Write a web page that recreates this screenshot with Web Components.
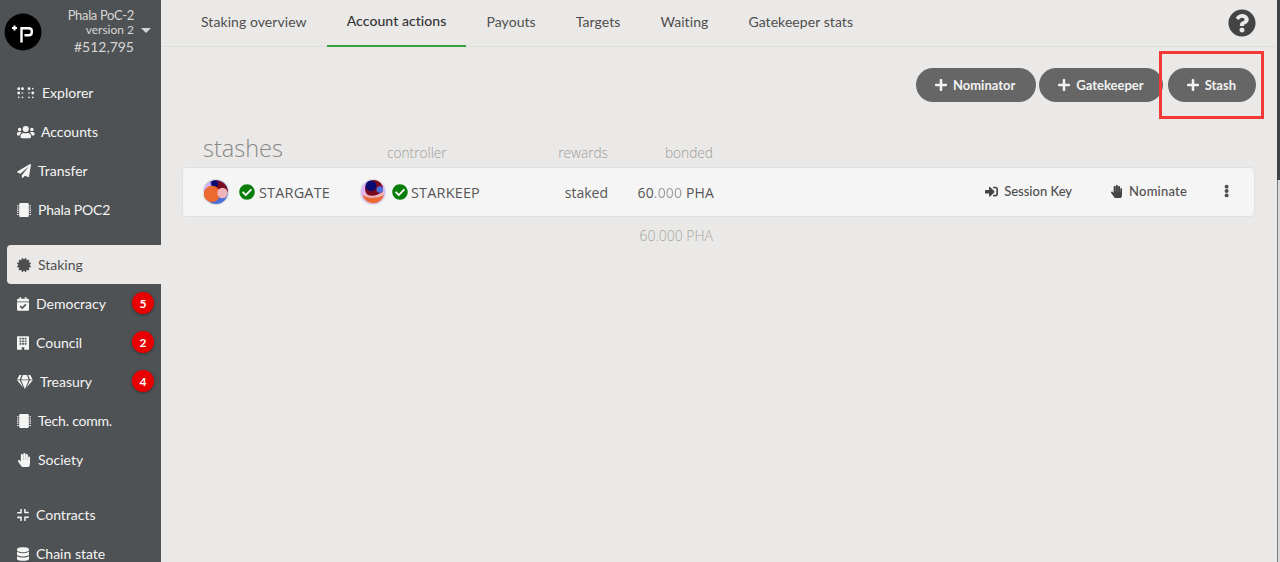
<!DOCTYPE html>
<html>
<head>
<meta charset="utf-8">
<title>Staking</title>
<style>
    html, body { margin: 0; height: 100%; overflow: hidden; }
    body { font-family: Lato, "Liberation Sans", sans-serif; background: #eae9e7; }
</style>
</head>
<body>
<polka-app></polka-app>

<script>
// Icons used around the page, all on their original font-awesome style grids.
const ICONS = {
    braille: { box: '0 0 640 512', body: '<g fill="currentColor"><circle cx="64" cy="96" r="52"/><circle cx="200" cy="96" r="52"/><circle cx="64" cy="256" r="52"/><circle cx="200" cy="256" r="30"/><circle cx="64" cy="416" r="30"/><circle cx="200" cy="416" r="30"/><circle cx="440" cy="96" r="52"/><circle cx="576" cy="96" r="30"/><circle cx="440" cy="256" r="30"/><circle cx="576" cy="256" r="52"/><circle cx="440" cy="416" r="30"/><circle cx="576" cy="416" r="30"/></g>' },
    users: { box: '0 0 640 512', body: '<path fill="currentColor" d="M96 224a64 64 0 1 0 0-128 64 64 0 0 0 0 128zm448 0a64 64 0 1 0 0-128 64 64 0 0 0 0 128zm32 32h-64c-17.600 0-33.500 7.100-45.100 18.600 40.300 22.100 68.900 62 75.100 109.400h66c17.700 0 32-14.300 32-32v-32c0-35.300-28.700-64-64-64zm-256 0a112 112 0 1 0 0-224 112 112 0 0 0 0 224zm76.800 32h-8.300c-20.800 10-43.900 16-68.500 16s-47.600-6-68.500-16h-8.300C179.600 288 128 339.600 128 403.200V432c0 26.500 21.500 48 48 48h288c26.500 0 48-21.500 48-48v-28.800c0-63.600-51.600-115.200-115.200-115.200zm-223.700-13.400C161.500 263.100 145.600 256 128 256H64c-35.300 0-64 28.700-64 64v32c0 17.700 14.300 32 32 32h65.900c6.300-47.400 34.900-87.300 75.200-109.400z"/>' },
    plane: { box: '0 0 512 512', body: '<path fill="currentColor" d="M476 3.200L12.500 270.600c-18.100 10.400-15.800 35.600 2.200 43.200L121 358.400l287.300-253.200c5.500-4.900 13.300 2.600 8.600 8.300L176 407v80.500c0 23.600 28.500 32.900 42.500 15.800L282 426l124.600 52.200c14.200 6 30.400-2.900 33-18.200l72-432C515 7.800 493.300-6.800 476 3.200z"/>' },
    chip: { box: '0 0 512 512', body: '<path fill="currentColor" d="M128 0h256c26 0 48 22 48 48v416c0 26-22 48-48 48H128c-26 0-48-22-48-48V48c0-26 22-48 48-48zM0 80h56v40H0zM0 160h56v40H0zM0 240h56v40H0zM0 320h56v40H0zM0 400h56v40H0zM456 80h56v40h-56zM456 160h56v40h-56zM456 240h56v40h-56zM456 320h56v40h-56zM456 400h56v40h-56z"/>' },
    certificate: { box: '0 0 512 512', body: '<path fill="currentColor" d="M458.600 255.900l46-45c13.700-13 7.300-36-10.700-40.300l-62.700-16 17.700-62c5-17.800-11.800-34.700-29.700-29.700l-62 17.700-16-62.700C336.900.300 313.600-6 300.900 7.400l-45 46.300-45-46.300C198.200-6 174.800.200 170.600 17.900l-16 62.700-62-17.700C74.800 57.900 58 74.700 63 92.600l17.700 62-62.700 16C0 174.900-6.400 197.900 7.300 210.900l46 45-46 45c-13.700 13-7.300 36 10.700 40.300l62.700 16-17.700 62c-5 17.800 11.800 34.700 29.700 29.700l62-17.700 16 62.700c4.400 18.500 28.200 23.800 40.300 10.700l45-46 45 46c12.300 13.300 35.900 7.600 40.300-10.700l16-62.700 62 17.700c17.800 5 34.700-11.800 29.700-29.700l-17.700-62 62.700-16c18-4.300 24.400-27.300 10.700-40.300z"/>' },
    calendar: { box: '0 0 448 512', body: '<path fill="currentColor" d="M436 160H12c-6.600 0-12-5.400-12-12v-36c0-26.500 21.500-48 48-48h48V12c0-6.600 5.400-12 12-12h40c6.600 0 12 5.400 12 12v52h128V12c0-6.600 5.400-12 12-12h40c6.600 0 12 5.400 12 12v52h48c26.500 0 48 21.500 48 48v36c0 6.600-5.400 12-12 12zM12 192h424c6.600 0 12 5.400 12 12v260c0 26.500-21.500 48-48 48H48c-26.500 0-48-21.500-48-48V204c0-6.600 5.400-12 12-12zm333.300 95.900l-28.200-28.400c-4.700-4.700-12.300-4.700-17-.1L194.100 364.400l-45.900-46.300c-4.700-4.700-12.300-4.700-17-.1l-28.400 28.200c-4.700 4.700-4.700 12.300-.1 17l82.600 83.300c4.700 4.700 12.300 4.700 17 .1l142.900-141.700c4.700-4.700 4.700-12.300.1-17z"/>' },
    building: { box: '0 0 448 512', body: '<path fill="currentColor" fill-rule="evenodd" d="M24 0h400c13 0 24 11 24 24v488H272v-88c0-7-5-12-12-12h-72c-7 0-12 5-12 12v88H0V24C0 11 11 0 24 0zM96 64v64h64V64zm96 0v64h64V64zm96 0v64h64V64zM96 160v64h64v-64zm96 0v64h64v-64zm96 0v64h64v-64zM96 256v64h64v-64zm96 0v64h64v-64zm96 0v64h64v-64z"/>' },
    gem: { box: '0 0 576 512', body: '<path fill="currentColor" d="M485.500 0L576 160H474.900L405.700 0h79.800zm-128 0l69.200 160H149.300L218.500 0h139zm-267 0h79.800l-69.200 160H0L90.500 0zM0 192h100.700l123 251.700c1.500 3.100-2.700 5.900-5 3.300L0 192zm148.200 0h279.600l-137 318.200c-1 2.400-4.500 2.400-5.500 0L148.200 192zm204.100 251.700l123-251.700H576L357.300 446.900c-2.300 2.700-6.500-.1-5-3.200z"/>' },
    hand: { box: '0 0 448 512', body: '<path fill="currentColor" d="M408.781 128.007C386.356 127.578 368 146.360 368 168.790V256h-8V79.790c0-22.430-18.356-41.212-40.781-40.783C297.488 39.423 280 57.169 280 79v177h-8V40.790C272 18.360 253.644-.422 231.219.007 209.488.423 192 18.169 192 40v216h-8V80.790c0-22.430-18.356-41.212-40.781-40.783C121.488 40.423 104 58.169 104 80v235.992l-31.648-43.519c-12.993-17.866-38.009-21.817-55.877-8.823-17.865 12.994-21.815 38.010-8.822 55.877l125.601 172.705A48 48 0 0 0 172.073 512h197.590c22.274 0 41.622-15.324 46.724-37.006l26.508-112.660a192.011 192.011 0 0 0 5.104-43.975V168c.001-21.831-17.487-39.577-39.218-39.993z"/>' },
    compress: { box: '0 0 448 512', body: '<path fill="currentColor" d="M136 32h32c6 0 12 6 12 12v136c0 13-11 24-24 24H20c-6 0-12-6-12-12v-32c0-6 6-12 12-12h104V44c0-6 6-12 12-12zM280 32h32c6 0 12 6 12 12v92h104c6 0 12 6 12 12v32c0 6-6 12-12 12H292c-13 0-24-11-24-24V44c0-6 6-12 12-12zM20 308h136c13 0 24 11 24 24v136c0 6-6 12-12 12h-32c-6 0-12-6-12-12V376H20c-6 0-12-6-12-12v-32c0-6 6-12 12-12zM292 308h136c6 0 12 6 12 12v32c0 6-6 12-12 12H324v104c0 6-6 12-12 12h-32c-6 0-12-6-12-12V332c0-13 11-24 24-24z"/>' },
    database: { box: '0 0 448 512', body: '<path fill="currentColor" d="M448 73.100v45.700C448 159.100 347.700 192 224 192S0 159.100 0 118.900V73.100C0 32.900 100.300 0 224 0s224 32.900 224 73.100zm0 102.900v102.900c0 40.200-100.300 73.100-224 73.100S0 319.100 0 278.900V176c48.100 33.100 136.200 48.600 224 48.600S399.900 209.100 448 176zm0 160v102.900C448 479.100 347.700 512 224 512S0 479.100 0 438.900V336c48.100 33.100 136.200 48.600 224 48.600S399.900 369.100 448 336z"/>' },
    plus: { box: '0 0 448 512', body: '<path fill="currentColor" d="M416 208H272V64c0-17.670-14.330-32-32-32h-32c-17.670 0-32 14.330-32 32v144H32c-17.670 0-32 14.330-32 32v32c0 17.670 14.330 32 32 32h144v144c0 17.670 14.330 32 32 32h32c17.670 0 32-14.330 32-32V304h144c17.670 0 32-14.330 32-32v-32c0-17.670-14.330-32-32-32z"/>' },
    check: { box: '0 0 512 512', body: '<path fill="currentColor" d="M504 256c0 136.967-111.033 248-248 248S8 392.967 8 256 119.033 8 256 8s248 111.033 248 248zM227.314 387.314l184-184c6.248-6.248 6.248-16.379 0-22.627l-22.627-22.627c-6.248-6.249-16.379-6.249-22.628 0L216 308.118l-70.059-70.059c-6.248-6.248-16.379-6.248-22.628 0l-22.627 22.627c-6.248 6.248-6.248 16.379 0 22.627l104 104c6.249 6.249 16.379 6.249 22.628 0z"/>' },
    question: { box: '0 0 512 512', body: '<path fill="currentColor" d="M504 256c0 136.997-111.043 248-248 248S8 392.997 8 256C8 119.083 119.043 8 256 8s248 111.083 248 248zM262.655 90c-54.497 0-89.255 22.957-116.549 63.758-3.536 5.286-2.353 12.415 2.715 16.258l34.699 26.310c5.205 3.947 12.621 3.008 16.665-2.122 17.864-22.658 30.113-35.797 57.303-35.797 20.429 0 45.698 13.148 45.698 32.958 0 14.976-12.363 22.667-32.534 33.976C247.128 238.528 216 254.941 216 296v4c0 6.627 5.373 12 12 12h56c6.627 0 12-5.373 12-12v-1.333c0-28.462 83.186-29.647 83.186-106.667 0-58.002-60.165-102-116.531-102zM256 338c-25.365 0-46 20.635-46 46 0 25.364 20.635 46 46 46s46-20.636 46-46c0-25.365-20.635-46-46-46z"/>' },
    signin: { box: '0 0 512 512', body: '<path fill="currentColor" d="M416 448h-84c-6.600 0-12-5.400-12-12v-40c0-6.600 5.400-12 12-12h84c17.700 0 32-14.300 32-32V160c0-17.700-14.300-32-32-32h-84c-6.600 0-12-5.400-12-12V76c0-6.600 5.400-12 12-12h84c53 0 96 43 96 96v192c0 53-43 96-96 96zm-47-201L201 79c-15-15-41-4.500-41 17v96H24c-13.300 0-24 10.700-24 24v96c0 13.300 10.700 24 24 24h136v96c0 21.500 26 32 41 17l168-168c9.300-9.400 9.300-24.600 0-34z"/>' },
    dots: { box: '0 0 192 512', body: '<g fill="currentColor"><circle cx="96" cy="96" r="72"/><circle cx="96" cy="256" r="72"/><circle cx="96" cy="416" r="72"/></g>' }
};

// The lighter font of the table, same in all its parts.
const TABLE_FONT = '"Open Sans", Lato, sans-serif';

// ### A single glyph from the list above ###
class PolkaIcon extends HTMLElement {
    connectedCallback() {
        const icon = ICONS[this.getAttribute('name')];
        this.attachShadow({ mode: 'open' });
        this.shadowRoot.innerHTML = `
            <style>
                :host { display: inline-flex; align-items: center; justify-content: center; flex: none; }
                svg { display: block; height: 100%; }
            </style>
            <svg viewBox="${icon.box}" aria-hidden="true">${icon.body}</svg>
        `;
    }
}

// ### One link of the left menu, with an optional red count ###
class NavItem extends HTMLElement {
    connectedCallback() {
        const icon = this.getAttribute('icon');
        const count = this.getAttribute('count');
        const width = this.getAttribute('icon-width') || 14;
        const gap = this.getAttribute('gap') || 7;
        this.attachShadow({ mode: 'open' });
        this.shadowRoot.innerHTML = `
            <style>
                :host {
                    display: flex;
                    align-items: center;
                    height: 39px;
                    margin-left: 7px;
                    padding-left: 10px;
                    font-size: 14px;
                    color: #f5f5f4;
                    box-sizing: border-box;
                    position: relative;
                }
                :host([active]) {
                    background: #eae9e7;
                    color: #4e4e4e;
                    border-radius: 4px 0 0 4px;
                }
                polka-icon { height: 14px; width: ${width}px; margin-right: ${gap}px; }
                .count {
                    position: absolute;
                    right: 7px;
                    top: 8px;
                    width: 22px;
                    height: 22px;
                    border-radius: 50%;
                    background: #e80000;
                    color: #fff;
                    font-size: 12px;
                    font-weight: 700;
                    display: flex;
                    align-items: center;
                    justify-content: center;
                    box-shadow: 0 1px 3px rgba(0, 0, 0, 0.4);
                }
            </style>
            <polka-icon name="${icon}"></polka-icon>
            <slot></slot>
            ${count ? `<span class="count">${count}</span>` : ''}
        `;
    }
}

// ### Chain logo, name, version and best block ###
class ChainInfo extends HTMLElement {
    constructor() {
        super();
        this.attachShadow({ mode: 'open' });
        this.shadowRoot.innerHTML = `
            <style>
                :host {
                    display: flex;
                    align-items: center;
                    height: 64px;
                    padding: 0 0 0 4px;
                    color: #d6d6d5;
                }
                .logo { width: 38px; height: 38px; flex: none; }
                .info {
                    flex: 1;
                    padding-right: 27px;
                    text-align: right;
                    position: relative;
                }
                .name { font-size: 13px; line-height: 14px; letter-spacing: -0.35px; }
                .version { font-size: 12px; line-height: 15px; }
                .best { font-size: 14px; line-height: 19px; }
                .caret {
                    position: absolute;
                    right: 10px;
                    top: 20px;
                    width: 0;
                    height: 0;
                    border: 5px solid transparent;
                    border-top-color: #d6d6d5;
                    border-bottom: 0;
                }
            </style>
            <svg class="logo" viewBox="0 0 38 38">
                <circle cx="19" cy="19" r="18.500" fill="#000"/>
                <path d="M17.500 29.500V15.200h7.300q3 0 3 3v1q0 3-3 3H20.500" fill="none" stroke="#fff" stroke-width="2.400"/>
                <path d="M10.500 12.500v5M8 15h5" stroke="#fff" stroke-width="2"/>
            </svg>
            <div class="info">
                <div class="name">Phala PoC-2</div>
                <div class="version">version 2</div>
                <div class="best">#512,795</div>
                <span class="caret"></span>
            </div>
        `;
    }
}

// ### Left column ###
class SideBar extends HTMLElement {
    constructor() {
        super();
        this.attachShadow({ mode: 'open' });
        this.shadowRoot.innerHTML = `
            <style>
                :host {
                    display: block;
                    width: 161px;
                    flex: none;
                    height: 562px;
                    overflow: hidden;
                    background: #4f5255;
                }
                .list { padding-top: 9px; }
                .spacer { height: 16px; }
                .tight { letter-spacing: -0.2px; }
            </style>
            <chain-info></chain-info>
            <div class="list">
                <nav-item icon="braille" icon-width="18" gap="7">Explorer</nav-item>
                <nav-item icon="users" icon-width="18" gap="6">Accounts</nav-item>
                <nav-item icon="plane" gap="7">Transfer</nav-item>
                <nav-item class="tight" icon="chip" gap="7">Phala POC2</nav-item>
                <div class="spacer"></div>
                <nav-item icon="certificate" active gap="7">Staking</nav-item>
                <nav-item icon="calendar" icon-width="12" gap="7" count="5">Democracy</nav-item>
                <nav-item icon="building" icon-width="12" gap="7" count="2">Council</nav-item>
                <nav-item icon="gem" icon-width="16" gap="7" count="4">Treasury</nav-item>
                <nav-item class="tight" icon="chip" gap="7">Tech. comm.</nav-item>
                <nav-item icon="hand" gap="7">Society</nav-item>
                <div class="spacer"></div>
                <nav-item icon="compress" icon-width="12" gap="7">Contracts</nav-item>
                <nav-item icon="database" icon-width="12" gap="7">Chain state</nav-item>
            </div>
        `;
    }
}

// ### Tabs across the top ###
class TabBar extends HTMLElement {
    constructor() {
        super();
        this.attachShadow({ mode: 'open' });
        const tabs = ['Staking overview', 'Account actions', 'Payouts', 'Targets', 'Waiting', 'Gatekeeper stats'];
        this.shadowRoot.innerHTML = `
            <style>
                :host {
                    display: flex;
                    align-items: stretch;
                    height: 47px;
                    box-sizing: border-box;
                    padding: 0 24px 0 20px;
                    border-bottom: 1px solid #dededc;
                    font-size: 14px;
                    color: #4e4e4e;
                    letter-spacing: 0.07px;
                }
                .tab {
                    display: flex;
                    align-items: center;
                    padding: 0 20px 2px;
                    margin-bottom: -1px;
                    border-bottom: 2px solid transparent;
                    box-sizing: border-box;
                }
                .tab.active {
                    color: #333;
                    font-weight: 500;
                    border-bottom-color: #36a23f;
                    padding-bottom: 4px;
                }
                polka-icon {
                    width: 28px;
                    height: 28px;
                    margin-left: auto;
                    align-self: center;
                    color: #444;
                }
            </style>
            ${tabs.map((t, i) => `<div class="tab${i === 1 ? ' active' : ''}">${t}</div>`).join('')}
            <polka-icon name="question"></polka-icon>
        `;
    }
}

// ### Dark rounded action button ###
class ActionButton extends HTMLElement {
    constructor() {
        super();
        this.attachShadow({ mode: 'open' });
        this.shadowRoot.innerHTML = `
            <style>
                :host {
                    display: inline-flex;
                    align-items: center;
                    height: 34px;
                    padding: 0 20px 0 19px;
                    box-sizing: border-box;
                    border-radius: 17px;
                    background: #666;
                    color: #f2f2f2;
                    font-size: 13px;
                    font-weight: 700;
                }
                polka-icon { height: 14px; width: 12px; margin-right: 6px; }
            </style>
            <polka-icon name="plus"></polka-icon><slot></slot>
        `;
    }
}

// ### Generated account circle ###
class IdentIcon extends HTMLElement {
    connectedCallback() {
        const variant = this.getAttribute('variant');
        this.attachShadow({ mode: 'open' });
        const shapes = variant === 'stash'
            ? `<circle cx="12" cy="12" r="12" fill="#4a6fd8"/>
               <path d="M7 1.500a12 12 0 0 1 17 10.500H14z" fill="#7a0a1e"/>
               <path d="M0 12a12 12 0 0 1 6-10.400L8 10z" fill="#d9b3f5"/>
               <circle cx="10.800" cy="3.800" r="3.400" fill="#0a0a70"/>
               <circle cx="8" cy="14" r="8.200" fill="#ec6a32"/>
               <circle cx="18.500" cy="13" r="5.200" fill="#f0b5ba"/>`
            : `<circle cx="12" cy="12" r="12" fill="#dcb6f7"/>
               <circle cx="13" cy="9" r="9" fill="#7a0a1e"/>
               <path d="M1.500 15a11 11 0 0 0 21.500-1c-6 5-15 5-21.500 1z" fill="#ec6a32"/>
               <path d="M2 12q9 8 21-1l-.2 4q-10 5.500-19.800.500z" fill="#f0b5ba"/>
               <circle cx="10" cy="5.800" r="5.400" fill="#0a0a70"/>
               <circle cx="18.800" cy="9.600" r="3.300" fill="#4a6fd8"/>`;
        this.shadowRoot.innerHTML = `
            <style>
                :host { display: block; width: 24px; height: 24px; flex: none; }
                svg { display: block; filter: drop-shadow(0 0 1px rgba(0, 0, 0, 0.25)); }
            </style>
            <svg width="24" height="24" viewBox="0 0 24 24">${shapes}</svg>
        `;
    }
}

// ### Avatar, green tick and account name ###
class AccountName extends HTMLElement {
    connectedCallback() {
        const gap = this.getAttribute('gap') || 11;
        const after = this.getAttribute('after') || 3;
        this.attachShadow({ mode: 'open' });
        this.shadowRoot.innerHTML = `
            <style>
                :host { display: flex; align-items: center; font-size: 14.500px; letter-spacing: 0.15px; color: #555; }
                ident-icon { margin-right: ${gap}px; }
                polka-icon { width: 16px; height: 16px; color: #0a7d0a; margin-right: ${after}px; }
            </style>
            <ident-icon variant="${this.getAttribute('variant')}"></ident-icon>
            <polka-icon name="check"></polka-icon>
            <slot></slot>
        `;
    }
}

// ### Small text button inside a row ###
class RowAction extends HTMLElement {
    connectedCallback() {
        this.attachShadow({ mode: 'open' });
        this.shadowRoot.innerHTML = `
            <style>
                :host { display: inline-flex; align-items: center; font-family: Lato, sans-serif; font-size: 13px; color: #4e4e4e; font-weight: 500; }
                polka-icon { height: 13px; width: 13px; margin-right: 6px; color: #444; }
            </style>
            <polka-icon name="${this.getAttribute('icon')}"></polka-icon><slot></slot>
        `;
    }
}

// ### Bonded amount, with the decimals faded ###
class BalanceValue extends HTMLElement {
    constructor() {
        super();
        this.attachShadow({ mode: 'open' });
        this.shadowRoot.innerHTML = `
            <style>
                :host { display: inline-block; }
                .dec { opacity: var(--decimals-opacity, 0.55); }
            </style>
            60<span class="dec">.000</span> PHA
        `;
    }
}

// ### The stashes table: header, one account row, the footer total ###
class StashTable extends HTMLElement {
    constructor() {
        super();
        this.attachShadow({ mode: 'open' });
        this.shadowRoot.innerHTML = `
            <style>
                :host { display: block; font-family: ${TABLE_FONT}; font-size: 14px; }
                .grid {
                    display: grid;
                    grid-template-columns: 178px 141px 106px 1fr;
                    align-items: center;
                }
                .head {
                    height: 38px;
                    align-items: end;
                    color: #9c9c9a;
                    font-size: 13.700px;
                    font-weight: 300;
                    padding-left: 1px;
                }
                .head h1 {
                    margin: 0 0 2px 20px;
                    font-size: 23.500px;
                    font-weight: 300;
                    line-height: 33px;
                    color: #888;
                }
                .head div { padding-bottom: 5px; }
                .head .controller { padding-left: 26px; }
                .right { text-align: right; }
                .row {
                    height: 50px;
                    box-sizing: border-box;
                    background: #f5f5f5;
                    border: 1px solid #dfe0e1;
                    border-radius: 4px;
                    color: #555;
                }
                .row > :first-child { padding-left: 21px; }
                .row balance-value { letter-spacing: 0.15px; }
                .actions {
                    display: flex;
                    align-items: center;
                    justify-content: flex-end;
                    padding: 0 24px 2px 0;
                }
                .actions row-action:nth-child(2) { margin-left: 38px; letter-spacing: 0.2px; }
                .actions polka-icon { width: 6px; height: 14px; margin-left: 37px; color: #4e4e4e; }
                .foot {
                    height: 37px;
                    padding-left: 1px;
                    color: #a5a5a3;
                    font-size: 14px;
                    font-weight: 300;
                    --decimals-opacity: 1;
                }
            </style>
            <div class="grid head">
                <h1>stashes</h1>
                <div class="controller">controller</div>
                <div class="right">rewards</div>
                <div class="right" style="width:105px;">bonded</div>
            </div>
            <div class="grid row">
                <account-name variant="stash" gap="11" after="4">STARGATE</account-name>
                <account-name variant="controller" gap="7">STARKEEP</account-name>
                <div class="right">staked</div>
                <div style="display:flex;">
                    <div class="right" style="width:106px;"><balance-value></balance-value></div>
                    <div class="actions" style="flex:1;">
                        <row-action icon="signin">Session Key</row-action>
                        <row-action icon="hand">Nominate</row-action>
                        <polka-icon name="dots"></polka-icon>
                    </div>
                </div>
            </div>
            <div class="grid foot">
                <div></div><div></div><div></div>
                <div class="right" style="width:105px;"><balance-value></balance-value></div>
            </div>
        `;
    }
}

// ### Main page: sidebar, tabs, buttons, table, and the red marker ###
class PolkaApp extends HTMLElement {
    constructor() {
        super();
        this.attachShadow({ mode: 'open' });
        this.shadowRoot.innerHTML = `
            <style>
                :host { display: flex; height: 562px; position: relative; overflow: hidden; }
                main { flex: 1; min-width: 0; }
                .buttons {
                    display: flex;
                    justify-content: flex-end;
                    padding: 21px 24px 0 0;
                }
                .buttons action-button:nth-child(1) { padding-right: 21px; }
                .buttons action-button:nth-child(2) { margin-left: 3px; padding-right: 19px; }
                .buttons action-button:nth-child(3) { margin-left: 5px; }
                stash-table { margin: 27px 25px 0 21px; }
                /* Marker drawn on top of the screenshot, around the Stash button. */
                .marker {
                    position: absolute;
                    left: 1159px;
                    top: 51px;
                    width: 105px;
                    height: 68px;
                    box-sizing: border-box;
                    border: 3px solid #f33838;
                }
                /* Window scrollbar at the right edge: track with the thumb on it. */
                .track {
                    position: absolute;
                    right: 0;
                    top: 0;
                    bottom: 0;
                    width: 3px;
                    box-sizing: border-box;
                    background: #d9d9d8;
                    border-left: 1px solid #77797a;
                }
                .thumb {
                    position: absolute;
                    right: 0;
                    top: 0;
                    width: 3px;
                    height: 180px;
                    background: #3f444a;
                }
            </style>
            <side-bar></side-bar>
            <main>
                <tab-bar></tab-bar>
                <div class="buttons">
                    <action-button>Nominator</action-button>
                    <action-button>Gatekeeper</action-button>
                    <action-button>Stash</action-button>
                </div>
                <stash-table></stash-table>
            </main>
            <div class="track"></div>
            <div class="thumb"></div>
            <div class="marker"></div>
        `;
    }
}

customElements.define('polka-icon', PolkaIcon);
customElements.define('nav-item', NavItem);
customElements.define('chain-info', ChainInfo);
customElements.define('side-bar', SideBar);
customElements.define('tab-bar', TabBar);
customElements.define('action-button', ActionButton);
customElements.define('ident-icon', IdentIcon);
customElements.define('account-name', AccountName);
customElements.define('row-action', RowAction);
customElements.define('balance-value', BalanceValue);
customElements.define('stash-table', StashTable);
customElements.define('polka-app', PolkaApp);
</script>
</body>
</html>
